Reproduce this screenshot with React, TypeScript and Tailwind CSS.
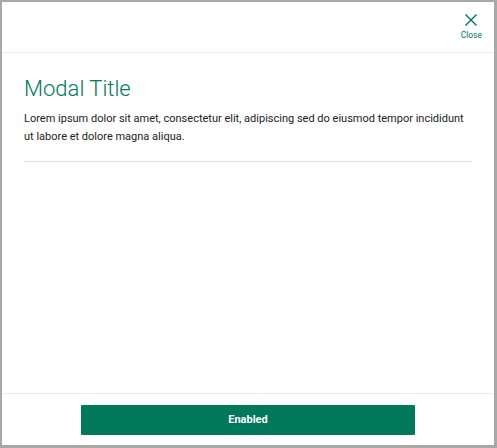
import React from "react";

function CloseIcon() {
  return (
    <svg width="12" height="12" viewBox="0 0 12 12" fill="none">
      <path d="M1 1L11 11M11 1L1 11" stroke="#00795a" strokeWidth="1.4" strokeLinecap="square" />
    </svg>
  );
}

export default function App() {
  return (
    <div className="w-[497px] h-[448px] bg-[#a8a8a8] pl-[2px] pt-[2px] pr-[3px] pb-[3px]" style={{ fontFamily: "Roboto, 'Liberation Sans', sans-serif" }}>
      <div className="w-full h-full bg-white flex flex-col">
        <div className="h-[51px] border-b border-[#ececec] flex justify-end items-start pr-[12px] pt-[12px]">
          <button className="flex flex-col items-center gap-[5px]">
            <CloseIcon />
            <span className="text-[8.5px] leading-none text-[#00795a]">Close</span>
          </button>
        </div>
        <div className="flex-1 px-[22px] pt-[22px]">
          <h1 className="text-[22px] leading-[28px] font-light text-[#007a5a]">Modal Title</h1>
          <p className="mt-[7px] text-[11px] leading-[18px] text-[#222222]">
            Lorem ipsum dolor sit amet, consectetur elit, adipiscing sed do eiusmod tempor incididunt ut labore et dolore magna aliqua.
          </p>
          <div className="mt-[15px] h-px bg-[#dcdcdc]" />
        </div>
        <div className="h-[52px] border-t border-[#ececec] flex justify-center items-start pt-[11px]">
          <button className="w-[334px] h-[30px] bg-[#00795a] rounded-[1px] text-white text-[11px] font-bold">
            Enabled
          </button>
        </div>
      </div>
    </div>
  );
}
